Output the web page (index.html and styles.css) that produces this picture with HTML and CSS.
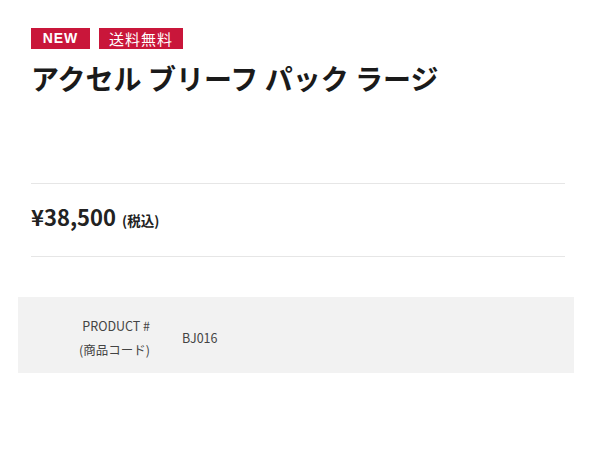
FILE: index.html
```html
<!DOCTYPE html>
<html lang="ja">
<head>
    <meta charset="UTF-8">
    <meta name="viewport" content="width=device-width, initial-scale=1.0">
    <title>アクセル ブリーフ パック ラージ</title>
    <link rel="stylesheet" href="styles.css">
</head>
<body>
    <div class="product">
        <div class="badges">
            <span class="badge badge-new">NEW</span>
            <span class="badge badge-ship">送料無料</span>
        </div>
        <h1 class="product-name">アクセル ブリーフ パック ラージ</h1>

        <div class="price">
            <span class="price-value">¥38,500</span>
            <span class="price-tax">(税込)</span>
        </div>

        <div class="spec">
            <div class="spec-label">PRODUCT #<br>(商品コード)</div>
            <div class="spec-value">BJ016</div>
        </div>
    </div>
</body>
</html>
```

FILE: styles.css
```css
body {
    margin: 0;
    font-family: "Noto Sans CJK JP", "Noto Sans", sans-serif;
    color: #222;
    background: #fff;
}
.product {
    width: 534px;
    padding: 28px 0 0 31px;
}
.badges {
    display: flex;
    gap: 9px;
}
.badge {
    display: block;
    height: 21px;
    line-height: 21px;
    background: #c9163a;
    color: #fff;
    text-align: center;
}
.badge-new {
    width: 59px;
    font-family: "Liberation Sans", Arial, sans-serif;
    font-weight: bold;
    font-size: 14px;
    letter-spacing: 1px;
}
.badge-ship {
    width: 84px;
    font-size: 15px;
    letter-spacing: 1px;
}
.product-name {
    margin: 9px 0 0;
    height: 125px;
    font-size: 28px;
    line-height: 40px;
    font-weight: bold;
    color: #1a1a1a;
}
.price {
    display: flex;
    align-items: baseline;
    gap: 6px;
    height: 34px;
    padding: 15px 0 23px;
    border-top: 1px solid #e6e6e6;
    border-bottom: 1px solid #e6e6e6;
}
.price-value {
    font-size: 22px;
    line-height: 34px;
    font-weight: bold;
}
.price-tax {
    font-size: 13.5px;
    font-weight: bold;
}
.spec {
    display: flex;
    align-items: center;
    gap: 32px;
    margin: 40px -9px 0 -13px;
    padding: 17px 0 11px;
    background: #f2f2f2;
    font-size: 12.5px;
    line-height: 24px;
    color: #444;
}
.spec-label {
    width: 132px;
    text-align: right;
}
```
